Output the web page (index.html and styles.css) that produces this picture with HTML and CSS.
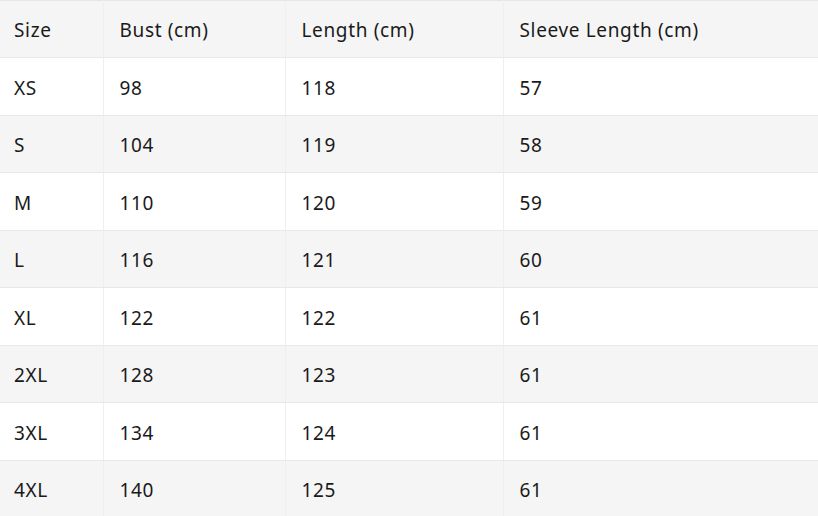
FILE: index.html
```html
<!DOCTYPE html>
<html>
<head>
<meta charset="utf-8">
<link rel="stylesheet" href="styles.css">
</head>
<body>
<table class="size-table">
  <colgroup>
    <col class="c1"><col class="c2"><col class="c3"><col class="c4">
  </colgroup>
  <thead>
    <tr><th>Size</th><th>Bust (cm)</th><th>Length (cm)</th><th>Sleeve Length (cm)</th></tr>
  </thead>
  <tbody>
    <tr><td>XS</td><td>98</td><td>118</td><td>57</td></tr>
    <tr><td>S</td><td>104</td><td>119</td><td>58</td></tr>
    <tr><td>M</td><td>110</td><td>120</td><td>59</td></tr>
    <tr><td>L</td><td>116</td><td>121</td><td>60</td></tr>
    <tr><td>XL</td><td>122</td><td>122</td><td>61</td></tr>
    <tr><td>2XL</td><td>128</td><td>123</td><td>61</td></tr>
    <tr><td>3XL</td><td>134</td><td>124</td><td>61</td></tr>
    <tr><td>4XL</td><td>140</td><td>125</td><td>61</td></tr>
  </tbody>
</table>
</body>
</html>
```
FILE: styles.css
```css
html, body {
  margin: 0;
  padding: 0;
  background: #ffffff;
}
body {
  font-family: "Noto Sans", "Open Sans", sans-serif;
  color: #1a1a1a;
  overflow: hidden;
}
.size-table {
  border-collapse: collapse;
  table-layout: fixed;
  width: 822px;
  margin-left: -2px;
  margin-top: -0.5px;
  border-top: 1px solid #e6e6e6;
}
.c1 { width: 105px; }
.c2 { width: 182px; }
.c3 { width: 218px; }
.c4 { width: 317px; }
.size-table th,
.size-table td {
  height: 57.5px;
  padding: 3px 16px 0;
  text-align: left;
  font-weight: normal;
  font-size: 19px;
  letter-spacing: 0.65px;
  border-bottom: 1px solid #e8e8e8;
  border-right: 1px solid #efefef;
  box-sizing: border-box;
}
.size-table th:last-child,
.size-table td:last-child {
  border-right: none;
}
.size-table thead tr {
  background: #f5f5f5;
}
.size-table tbody tr:nth-child(even) {
  background: #f5f5f5;
}
```
